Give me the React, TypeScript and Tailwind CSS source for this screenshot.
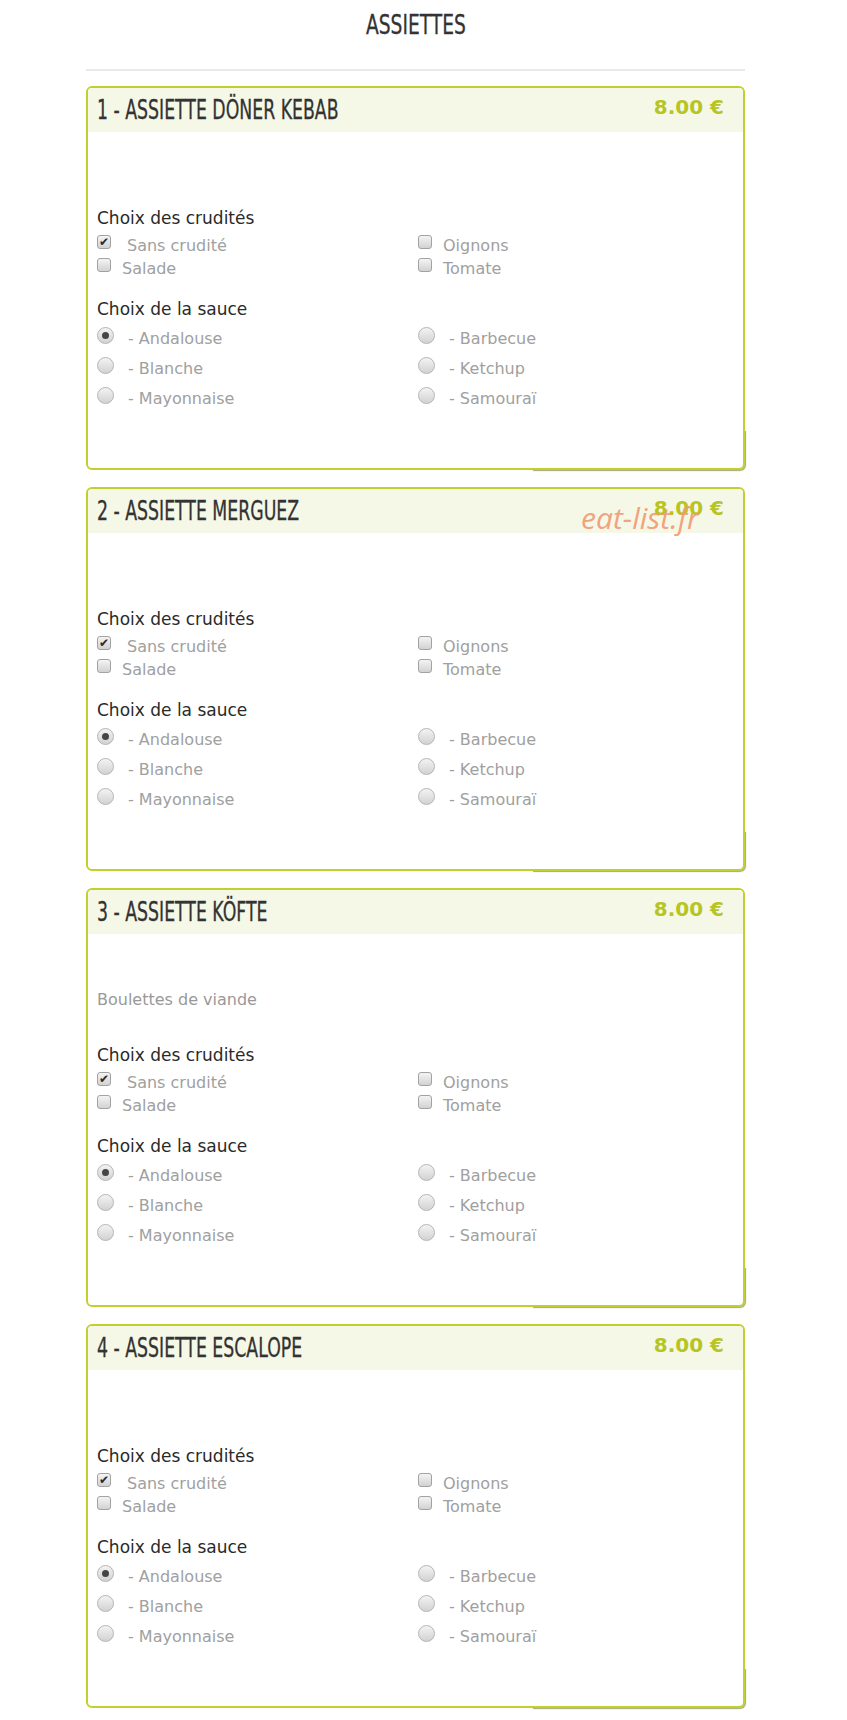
import React from "react";

// Données des assiettes
const plats = [
  { id: 1, nom: "ASSIETTE DÖNER KEBAB", prix: "8.00 €", description: "" },
  { id: 2, nom: "ASSIETTE MERGUEZ", prix: "8.00 €", description: "" },
  { id: 3, nom: "ASSIETTE KÖFTE", prix: "8.00 €", description: "Boulettes de viande" },
  { id: 4, nom: "ASSIETTE ESCALOPE", prix: "8.00 €", description: "" },
];

const crudites = [
  { label: "Sans crudité", checked: true, pad: true },
  { label: "Oignons", checked: false, pad: false },
  { label: "Salade", checked: false, pad: false },
  { label: "Tomate", checked: false, pad: false },
];

const sauces = [
  { label: "- Andalouse", checked: true },
  { label: "- Barbecue", checked: false },
  { label: "- Blanche", checked: false },
  { label: "- Ketchup", checked: false },
  { label: "- Mayonnaise", checked: false },
  { label: "- Samouraï", checked: false },
];

const titleFont = { fontFamily: '"DejaVu Sans Condensed", "Liberation Sans", sans-serif' };

function Checkbox({ checked }: { checked: boolean }) {
  return (
    <span className="mt-[1px] flex h-[14px] w-[14px] shrink-0 items-center justify-center rounded-[3px] border border-[#a2a2a2] bg-gradient-to-b from-[#f4f4f4] to-[#d2d2d2] text-[12px] leading-none text-[#2b2b2b]">
      {checked ? "✔" : null}
    </span>
  );
}

function Radio({ checked }: { checked: boolean }) {
  return (
    <span className="mt-[7px] flex h-[17px] w-[17px] shrink-0 items-center justify-center rounded-full border border-[#b5b5b5] bg-gradient-to-b from-[#f3f3f3] to-[#d2d2d2]">
      {checked ? <span className="h-[7px] w-[7px] rounded-full bg-[#454545]" /> : null}
    </span>
  );
}

function Carte({ plat }: { plat: (typeof plats)[number] }) {
  return (
    <div className="relative rounded-[6px] border-2 border-[#c3cf2e] bg-white">
      {/* en-tête */}
      <div className="flex h-[44px] items-start justify-between rounded-t-[4px] bg-[#f6f8e7] pl-[9px] pr-[19px]">
        <h2
          className="origin-left scale-x-[0.74] whitespace-nowrap text-[26px] leading-[44px] text-[#333] [-webkit-text-stroke:0.3px_#333]"
          style={titleFont}
        >
          {plat.id} - {plat.nom}
        </h2>
        <span className="mt-[9px] text-[20px] font-bold leading-none text-[#b6c523]">{plat.prix}</span>
      </div>

      <div className="px-[9px] pb-[58px] pt-[56px]">
        <p className={`h-5 leading-5 text-[#999] ${plat.description ? "mb-[35px]" : ""}`}>{plat.description}</p>

        <h3 className="text-[17px] leading-5 text-[#2a2a2a]">Choix des crudités</h3>
        <div className="mt-[6px] grid grid-cols-[321px_1fr]">
          {crudites.map((c) => (
            <label key={c.label} className="flex h-[23px] items-start">
              <Checkbox checked={c.checked} />
              <span className={`leading-[23px] text-[#a0a0a0] ${c.pad ? "ml-[16px]" : "ml-[11px]"}`}>{c.label}</span>
            </label>
          ))}
        </div>

        <h3 className="mt-[19px] text-[17px] leading-5 text-[#2a2a2a]">Choix de la sauce</h3>
        <div className="mt-[1px] grid grid-cols-[321px_1fr]">
          {sauces.map((s) => (
            <label key={s.label} className="flex h-[30px] items-start">
              <Radio checked={s.checked} />
              <span className="ml-[14px] pt-[4px] leading-[30px] text-[#a0a0a0]">{s.label}</span>
            </label>
          ))}
        </div>
      </div>

      {/* petite ombre en bas à droite */}
      <div className="pointer-events-none absolute -bottom-[2px] -right-[2px] h-[40px] w-[213px] rounded-br-[6px] shadow-[1px_1px_1px_rgba(90,100,0,0.55)]" />
    </div>
  );
}

export default function App() {
  return (
    <div
      className="relative min-h-[1720px] bg-white text-[16px]"
      style={{ fontFamily: '"DejaVu Sans", Tahoma, sans-serif' }}
    >
      <div className="ml-[86px] w-[659px]">
        <div className="flex h-[69px] justify-center pt-[5px]">
          <h1
            className="scale-x-[0.77] text-[27px] leading-[40px] text-[#333] [-webkit-text-stroke:0.3px_#333]"
            style={titleFont}
          >
            ASSIETTES
          </h1>
        </div>
        <div className="h-[2px] bg-[#e9e9e9]" />

        <div className="mt-[15px] flex flex-col gap-[17px]">
          {plats.map((p) => (
            <Carte key={p.id} plat={p} />
          ))}
        </div>
      </div>

      {/* filigrane */}
      <span
        className="pointer-events-none absolute left-[581px] top-[503px] text-[30px] italic leading-none text-[#f19a72] opacity-90"
        style={{ fontFamily: '"Open Sans", sans-serif' }}
      >
        eat-list.fr
      </span>
    </div>
  );
}
